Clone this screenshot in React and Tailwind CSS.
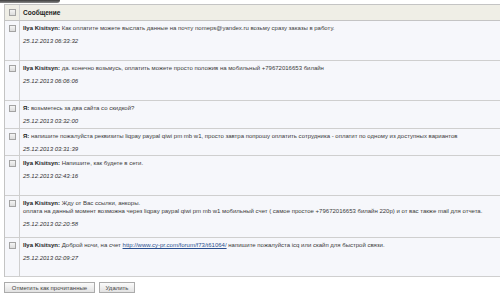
import React from 'react';

const messages = [
    { from: 'Ilya Kisitsyn', lines: ['Как оплатите можете выслать данные на почту nomeps@yandex.ru возьму сразу заказы в работу.'], date: '25.12.2013 06:33:32', pad: 'pb-[15px]' },
    { from: 'Ilya Kisitsyn', lines: ['да. конечно возьмусь, оплатить можете просто положив на мобильный +79672016653 билайн'], date: '25.12.2013 06:06:06', pad: 'pb-[15px]' },
    { from: 'Я', lines: ['возьметесь за два сайта со скидкой?'], date: '25.12.2013 03:32:00', pad: 'pb-[3px]' },
    { from: 'Я', lines: ['напишите пожалуйста реквизиты liqpay paypal qiwi pm mb w1, просто завтра попрошу оплатить сотрудника - оплатит по одному из доступных вариантов'], date: '25.12.2013 03:31:39', pad: 'pb-[2px]' },
    { from: 'Ilya Kisitsyn', lines: ['Напишите, как будете в сети.'], date: '25.12.2013 02:43:16', pad: 'pb-[15px]' },
    { from: 'Ilya Kisitsyn', lines: ['Жду от Вас ссылки, анкоры.', 'оплата на данный момент возможна через liqpay paypal qiwi pm mb w1 мобильный счет ( самое простое +79672016653 билайн 220р) и от вас также mail для отчета.'], date: '25.12.2013 02:20:58', pad: 'pb-[9px]' },
    { from: 'Ilya Kisitsyn', link: true, date: '25.12.2013 02:09:27', pad: 'pb-[14px]' },
];

const Checkbox = () => (
    <span className="block w-[7px] h-[7px] border border-[#a3a3a3] bg-gradient-to-b from-[#f4f4f4] to-[#dcdcdc]" />
);

const Message = ({ msg }) => (
    <div className="flex border-b border-[#cfcfcf]">
        <div className="w-[15px] shrink-0 border-r border-[#cfcfcf] flex justify-center pt-[4px]">
            <Checkbox />
        </div>
        <div className={`pl-[3px] pt-[3px] ${msg.pad}`}>
            {msg.link ? (
                <div className="h-[8px] leading-[8px] whitespace-nowrap">
                    <b className="text-[#222]">{msg.from}:</b> Доброй ночи, на счет{' '}
                    <a className="underline text-[#2a4f8f]">http://www.cy-pr.com/forum/f73/t61064/</a>{' '}
                    напишите пожалуйста icq или скайп для быстрой связи.
                </div>
            ) : (
                msg.lines.map((line, i) => (
                    <div key={i} className="h-[8px] leading-[8px] whitespace-nowrap">
                        {i === 0 && <b className="text-[#222]">{msg.from}:</b>}{i === 0 ? ' ' : ''}{line}
                    </div>
                ))
            )}
            <div className="mt-[5px] h-[8px] leading-[8px] italic text-[#333] whitespace-nowrap">{msg.date}</div>
        </div>
    </div>
);

export default function App() {
    return (
        <div className="w-[500px] h-[302px] overflow-hidden bg-white text-[6px] text-[#3a3a3a]" style={{ fontFamily: '"Liberation Sans", Arial, sans-serif' }}>
            {/* tab edge */}
            <div className="h-[4px]">
                <div className="h-[3px] w-[60px] bg-gradient-to-b from-[#3c3c3c] to-[#8a8a8a] rounded-br-[30px]" />
            </div>

            <div className="ml-[4px] w-[520px] border-l border-t border-[#c4c4c4] bg-[#f6f7fb]">
                {/* header */}
                <div className="flex h-[16px] bg-[#efeee6] border-b border-[#c4c4c4]">
                    <div className="w-[15px] shrink-0 border-r border-[#d4d4d4] flex items-center justify-center">
                        <Checkbox />
                    </div>
                    <div className="pl-[3px] flex items-center font-bold text-[#222] text-[6.5px]">Сообщение</div>
                </div>
                {messages.map((m, i) => <Message key={i} msg={m} />)}
            </div>

            {/* actions */}
            <div className="flex gap-[4px] ml-[4px] mt-[5px]">
                <button type="button" className="h-[11px] w-[91px] border border-[#ababab] bg-gradient-to-b from-[#fbfbfb] to-[#e2e2e2] text-[6px] text-[#444] leading-none">Отметить как прочитанные</button>
                <button type="button" className="h-[11px] w-[36px] border border-[#ababab] bg-gradient-to-b from-[#fbfbfb] to-[#e2e2e2] text-[6px] text-[#444] leading-none">Удалить</button>
            </div>
        </div>
    );
}
